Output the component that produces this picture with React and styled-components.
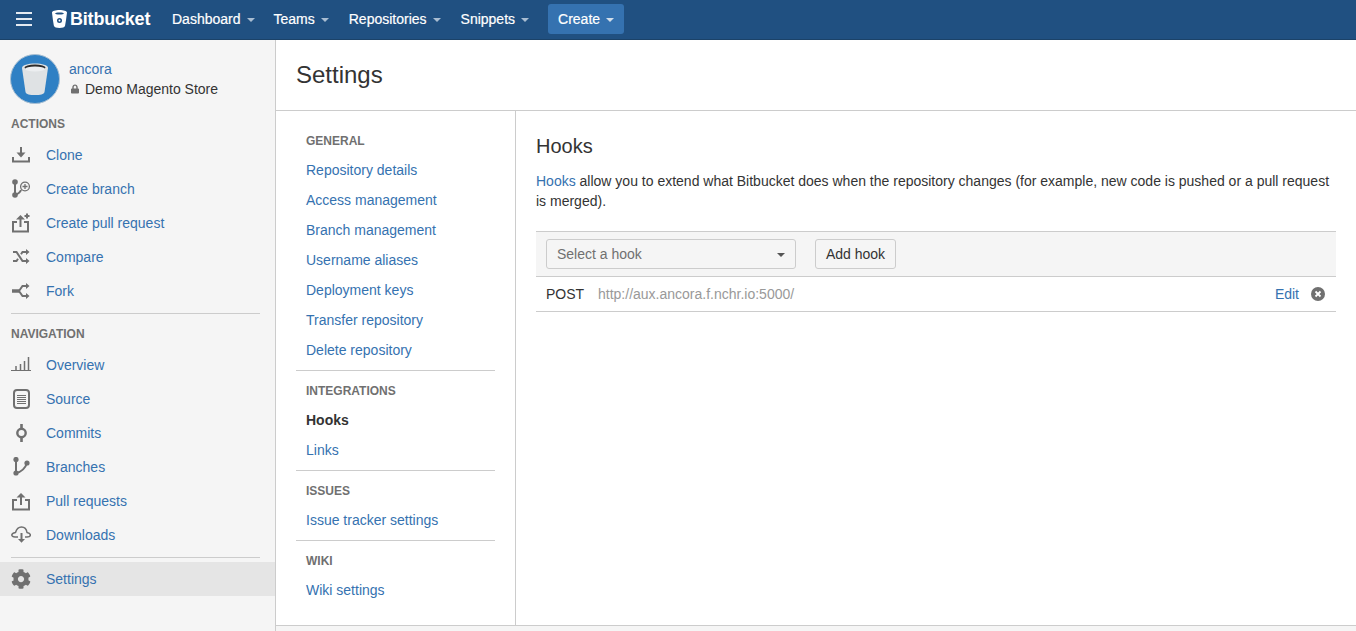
import React from 'react';
import styled, { createGlobalStyle } from 'styled-components';
import { FaCog, FaLock } from 'react-icons/fa';

const GlobalStyle = createGlobalStyle`
  html, body {
    margin: 0;
    padding: 0;
    background: #fff;
    overflow: hidden;
  }
  * {
    box-sizing: border-box;
  }
`;

const Page = styled.div`
  display: flex;
  flex-direction: column;
  width: 1356px;
  height: 631px;
  overflow: hidden;
  font-family: "Liberation Sans", Arial, sans-serif;
  font-size: 14px;
  line-height: 20px;
  color: #333;
`;

const TopBar = styled.header`
  display: flex;
  align-items: center;
  flex: none;
  height: 40px;
  padding: 0 0 1px 16px;
  background: #205081;
  border-bottom: 1px solid #1b4268;
`;

const Burger = styled.span`
  display: flex;
  flex-direction: column;
  gap: 4px;
  width: 16px;
  margin-right: 20px;

  i {
    display: block;
    height: 2px;
    background: #e4eaf1;
  }
`;

const Logo = styled.div`
  display: flex;
  align-items: center;
  gap: 3px;
  width: 120px;
  font-size: 18px;
  font-weight: 700;
  letter-spacing: -0.2px;
  color: #fff;
`;

const TopItem = styled.a`
  display: flex;
  align-items: center;
  gap: 6px;
  margin-right: ${(p) => p.$after}px;
  color: #fff;
  -webkit-text-stroke: 0.2px #fff;
`;

const Caret = styled.span`
  display: inline-block;
  width: 0;
  height: 0;
  margin-top: 1px;
  border-top: 4px solid ${(p) => p.$color};
  border-left: 4px solid transparent;
  border-right: 4px solid transparent;
`;

const CreateButton = styled.a`
  display: flex;
  align-items: center;
  gap: 6px;
  height: 30px;
  padding: 0 10px;
  border-radius: 3px;
  background: #3572b0;
  color: #fff;
  -webkit-text-stroke: 0.2px #fff;
`;

const Body = styled.div`
  display: flex;
  flex: 1;
  min-height: 0;
`;

const Sidebar = styled.aside`
  flex: none;
  width: 276px;
  background: #f5f5f5;
  border-right: 1px solid #ccc;
`;

const RepoBlock = styled.div`
  display: flex;
  height: 73px;
  padding: 14px 0 0 10px;
`;

const RepoText = styled.div`
  margin-left: 9px;
  padding-top: 5px;
`;

const RepoName = styled.div`
  display: flex;
  align-items: center;
  gap: 6px;
  padding-left: 2px;
  color: #333;

  svg {
    width: 8px;
    height: 10px;
    color: #707070;
  }
`;

const SideHeading = styled.div`
  height: 20px;
  margin-bottom: 5px;
  padding: 1px 0 0 11px;
  font-size: 12px;
  font-weight: 700;
  color: #707070;
`;

const SideRow = styled.a`
  display: flex;
  align-items: center;
  height: 34px;
  padding-left: 11px;
  color: #3572b0;
  background: ${(p) => (p.$active ? '#e5e5e5' : 'transparent')};

  svg {
    flex: none;
    width: 20px;
    height: 20px;
    margin-right: 15px;
    color: #707070;
  }
`;

const SideDivider = styled.hr`
  width: 249px;
  height: 1px;
  margin: ${(p) => p.$top}px 0 ${(p) => p.$bottom}px 11px;
  border: 0;
  background: #ccc;
`;

const Content = styled.main`
  display: flex;
  flex: 1;
  flex-direction: column;
  min-width: 0;
`;

const PageHeader = styled.div`
  flex: none;
  height: 71px;
  padding: 19px 0 0 20px;
  border-bottom: 1px solid #ccc;
`;

const PageTitle = styled.h1`
  margin: 0;
  font-size: 24px;
  font-weight: 400;
  line-height: 32px;
`;

const Columns = styled.div`
  display: flex;
  flex: none;
  height: 514px;
`;

const SettingsNav = styled.nav`
  flex: none;
  width: 240px;
  padding: 19px 0 0 20px;
  border-right: 1px solid #ccc;
`;

const NavHeading = styled.div`
  height: 20px;
  margin-bottom: 5px;
  padding: 1px 0 0 10px;
  font-size: 12px;
  font-weight: 700;
  color: #707070;
`;

const NavLink = styled.a`
  display: block;
  height: 30px;
  padding-left: 10px;
  line-height: 30px;
  font-weight: ${(p) => (p.$current ? 700 : 400)};
  color: ${(p) => (p.$current ? '#333' : '#3572b0')};
`;

const NavDivider = styled.hr`
  width: 199px;
  height: 1px;
  margin: 5px 0 9px;
  border: 0;
  background: #ccc;
`;

const Main = styled.section`
  flex: 1;
  min-width: 0;
  padding: 21px 20px 0;
`;

const SectionTitle = styled.h2`
  margin: 0 0 11px;
  font-size: 20px;
  font-weight: 400;
  line-height: 28px;
`;

const Intro = styled.p`
  margin: 0 0 20px;
`;

const Link = styled.a`
  color: #3572b0;
`;

const Toolbar = styled.div`
  display: flex;
  align-items: center;
  height: 46px;
  padding-left: 10px;
  background: #f5f5f5;
  border-top: 1px solid #ccc;
  border-bottom: 1px solid #ccc;
`;

const SelectBox = styled.div`
  display: flex;
  align-items: center;
  justify-content: space-between;
  width: 250px;
  height: 30px;
  margin-right: 19px;
  padding: 0 10px;
  border: 1px solid #ccc;
  border-radius: 3px;
  background: #f5f5f5;
  color: #707070;
`;

const Button = styled.button`
  width: 81px;
  height: 30px;
  padding: 0;
  border: 1px solid #ccc;
  border-radius: 3px;
  background: #f5f5f5;
  font: inherit;
  color: #333;
`;

const HookRow = styled.div`
  display: flex;
  align-items: center;
  height: 35px;
  padding: 0 11px 0 10px;
  border-bottom: 1px solid #ccc;
`;

const HookMethod = styled.span`
  width: 52px;
`;

const HookUrl = styled.span`
  flex: 1;
  color: #999;
`;

const RemoveIcon = styled.svg`
  width: 14px;
  height: 14px;
  margin-left: 12px;
`;

const FootStrip = styled.div`
  flex: 1;
  background: #f5f5f5;
  border-top: 1px solid #ccc;
`;

const stroke = { fill: 'none', stroke: 'currentColor', strokeWidth: 2 };

const icons = {
  clone: (
    <svg viewBox="0 0 20 20">
      <path {...stroke} d="M2 12v4.500h16V12" />
      <path {...stroke} d="M10 2v7" />
      <path fill="currentColor" d="M5.500 7.500h9L10 12.500z" />
    </svg>
  ),
  branch: (
    <svg viewBox="0 0 20 20">
      <path {...stroke} d="M4 3v13M4 16c3-1 5-2 6-5" />
      <circle cx="4" cy="3" r="2.800" fill="currentColor" />
      <circle cx="4" cy="16" r="2.800" fill="currentColor" />
      <circle cx="14" cy="7.500" r="4.400" fill="none" stroke="currentColor" strokeWidth="1.300" />
      <path fill="none" stroke="currentColor" strokeWidth="1.300" d="M11.500 7.500h5M14 5v5" />
    </svg>
  ),
  pullPlus: (
    <svg viewBox="0 0 20 20">
      <path {...stroke} d="M6 9H2v9.500h15V9h-4" />
      <path {...stroke} d="M9.500 14V5" />
      <path fill="currentColor" d="M5 6.500L9.500 2 14 6.500z" />
      <path {...stroke} d="M13.500 3h5M16 .5v5" />
    </svg>
  ),
  compare: (
    <svg viewBox="0 0 20 20">
      <path {...stroke} d="M2 5h3.500l6 9H15M2 14h3.500l1.500-2.200M10 7.200L11.500 5H15" />
      <path fill="currentColor" d="M15 2l3.500 3-3.500 3zM15 11l3.500 3-3.500 3z" />
    </svg>
  ),
  fork: (
    <svg viewBox="0 0 20 20">
      <path fill="none" stroke="currentColor" strokeWidth="3.500" d="M1 10h8" />
      <path {...stroke} d="M8 10l3.500-5H15M8 10l3.500 5H15" />
      <path fill="currentColor" d="M15 2l3.500 3-3.500 3zM15 12l3.500 3-3.500 3z" />
    </svg>
  ),
  overview: (
    <svg viewBox="0 0 20 20">
      <path fill="none" stroke="currentColor" strokeWidth="1" d="M0 15.500h20" />
      <path fill="none" stroke="currentColor" strokeWidth="1.500" d="M5 15v-4M9.500 15V9M13.500 15V6M17.500 15V2" />
    </svg>
  ),
  source: (
    <svg viewBox="0 0 20 20">
      <rect x="3" y="1" width="15" height="18" rx="3" {...stroke} />
      <path fill="none" stroke="currentColor" strokeWidth="1" d="M6 6.500h9M6 8.500h9M6 10.500h9M6 12.500h9M6 14.500h9" />
    </svg>
  ),
  commits: (
    <svg viewBox="0 0 20 20">
      <circle cx="10.500" cy="10" r="4.200" fill="none" stroke="currentColor" strokeWidth="2.400" />
      <path fill="none" stroke="currentColor" strokeWidth="2.600" d="M10.500 1v4.500M10.500 14.500V19" />
    </svg>
  ),
  branches: (
    <svg viewBox="0 0 20 20">
      <path {...stroke} d="M5 2v14M5 16c5-1 9-4 11-10" />
      <circle cx="5" cy="2.500" r="2.600" fill="currentColor" />
      <circle cx="5" cy="16" r="2.600" fill="currentColor" />
      <circle cx="16" cy="6" r="2.600" fill="currentColor" />
    </svg>
  ),
  pull: (
    <svg viewBox="0 0 20 20">
      <path {...stroke} d="M6 9H2v9.500h16V9h-4" />
      <path {...stroke} d="M10 14V5" />
      <path fill="currentColor" d="M5.500 6.500L10 2l4.500 4.500z" />
    </svg>
  ),
  downloads: (
    <svg viewBox="0 0 20 20">
      <path
        fill="none"
        stroke="currentColor"
        strokeWidth="1.500"
        d="M7 12H4C2 12 .8 11 .8 10S2.500 8 4.500 7.500C5.500 4 8 2 10.500 2S15.500 4 16 7.500c2 .5 3.400 1.500 3.400 2.500s-1.400 2-3.400 2h-2"
      />
      <path {...stroke} d="M10.500 8v7" />
      <path fill="currentColor" d="M7 14h7l-3.500 3.800z" />
    </svg>
  ),
  settings: <FaCog />,
};

const actions = [
  ['Clone', 'clone'],
  ['Create branch', 'branch'],
  ['Create pull request', 'pullPlus'],
  ['Compare', 'compare'],
  ['Fork', 'fork'],
];

const navigation = [
  ['Overview', 'overview'],
  ['Source', 'source'],
  ['Commits', 'commits'],
  ['Branches', 'branches'],
  ['Pull requests', 'pull'],
  ['Downloads', 'downloads'],
];

const topItems = [
  ['Dashboard', 19],
  ['Teams', 20],
  ['Repositories', 20],
  ['Snippets', 19],
];

const settingsNav = [
  {
    title: 'GENERAL',
    links: [
      'Repository details',
      'Access management',
      'Branch management',
      'Username aliases',
      'Deployment keys',
      'Transfer repository',
      'Delete repository',
    ],
  },
  { title: 'INTEGRATIONS', links: ['Hooks', 'Links'] },
  { title: 'ISSUES', links: ['Issue tracker settings'] },
  { title: 'WIKI', links: ['Wiki settings'] },
];

function BucketLogo() {
  return (
    <svg width="15" height="18" viewBox="0 0 15 18">
      <path
        fill="#fff"
        fillRule="evenodd"
        d="M7.500 0C3.500 0 0 1 0 2.500c0 .5 1.500 12 2 13.500.3 1 2.500 2 5.500 2s5.200-1 5.500-2c.5-1.500 2-13 2-13.500C15 1 11.500 0 7.500 0zm0 2.500C10 2.500 12 3 12 3.500S10 4.500 7.500 4.500 3 4 3 3.500 5 2.500 7.500 2.500zm0 5.500a2.500 2.500 0 1 1 0 5 2.500 2.500 0 0 1 0-5z"
      />
      <circle cx="7.500" cy="10.500" r="1" fill="#fff" />
    </svg>
  );
}

function RepoAvatar() {
  return (
    <svg width="50" height="50" viewBox="0 0 50 50" style={{ flex: 'none' }}>
      <circle cx="25" cy="25" r="24.500" fill="#2f80c4" stroke="#a9bfd2" strokeWidth="1" />
      <path fill="#dfe2e4" d="M12 14c0-3 6-4.500 13-4.500S38 11 38 14l-3.500 24c-.4 2.500-4.500 3-9.500 3s-9.100-.5-9.500-3z" />
      <ellipse cx="25" cy="13.500" rx="10.500" ry="3" fill="#2b2b2b" />
      <ellipse cx="25" cy="15" rx="10" ry="2.600" fill="#eceef0" />
    </svg>
  );
}

function SideLink({ label, icon, active }) {
  return (
    <SideRow $active={active}>
      {icons[icon]}
      {label}
    </SideRow>
  );
}

export default function App() {
  return (
    <Page>
      <GlobalStyle />
      <TopBar>
        <Burger>
          <i />
          <i />
          <i />
        </Burger>
        <Logo>
          <BucketLogo />
          Bitbucket
        </Logo>
        {topItems.map(([item, after]) => (
          <TopItem key={item} $after={after}>
            {item}
            <Caret $color="#a9bdd2" />
          </TopItem>
        ))}
        <CreateButton>
          Create
          <Caret $color="#d3deea" />
        </CreateButton>
      </TopBar>
      <Body>
        <Sidebar>
          <RepoBlock>
            <RepoAvatar />
            <RepoText>
              <Link>ancora</Link>
              <RepoName>
                <FaLock />
                Demo Magento Store
              </RepoName>
            </RepoText>
          </RepoBlock>
          <SideHeading>ACTIONS</SideHeading>
          {actions.map(([label, icon]) => (
            <SideLink key={label} label={label} icon={icon} />
          ))}
          <SideDivider $top={5} $bottom={9} />
          <SideHeading>NAVIGATION</SideHeading>
          {navigation.map(([label, icon]) => (
            <SideLink key={label} label={label} icon={icon} />
          ))}
          <SideDivider $top={5} $bottom={4} />
          <SideLink label="Settings" icon="settings" active />
        </Sidebar>
        <Content>
          <PageHeader>
            <PageTitle>Settings</PageTitle>
          </PageHeader>
          <Columns>
            <SettingsNav>
              {settingsNav.map((group, index) => (
                <div key={group.title}>
                  {index > 0 && <NavDivider />}
                  <NavHeading>{group.title}</NavHeading>
                  {group.links.map((link) => (
                    <NavLink key={link} $current={link === 'Hooks'}>
                      {link}
                    </NavLink>
                  ))}
                </div>
              ))}
            </SettingsNav>
            <Main>
              <SectionTitle>Hooks</SectionTitle>
              <Intro>
                <Link>Hooks</Link> allow you to extend what Bitbucket does when the repository changes (for
                example, new code is pushed or a pull request is merged).
              </Intro>
              <Toolbar>
                <SelectBox>
                  Select a hook
                  <Caret $color="#555" />
                </SelectBox>
                <Button>Add hook</Button>
              </Toolbar>
              <HookRow>
                <HookMethod>POST</HookMethod>
                <HookUrl>http://aux.ancora.f.nchr.io:5000/</HookUrl>
                <Link>Edit</Link>
                <RemoveIcon viewBox="0 0 14 14">
                  <circle cx="7" cy="7" r="7" fill="#707070" />
                  <path stroke="#fff" strokeWidth="1.800" d="M4.500 4.500l5 5M9.500 4.500l-5 5" />
                </RemoveIcon>
              </HookRow>
            </Main>
          </Columns>
          <FootStrip />
        </Content>
      </Body>
    </Page>
  );
}
